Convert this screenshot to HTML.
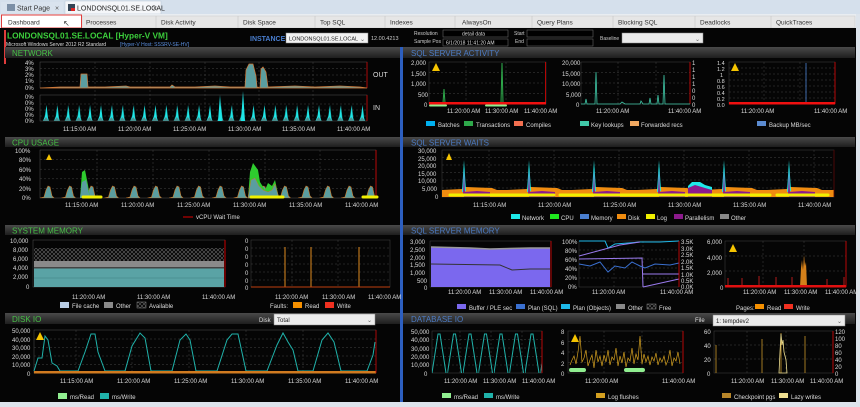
<!DOCTYPE html>
<html><head><meta charset="utf-8"><style>
html,body{margin:0;padding:0;width:860px;height:407px;overflow:hidden;background:#d5e0ec;font-family:"Liberation Sans",sans-serif}
svg{display:block}
text{font-family:"Liberation Sans",sans-serif}
</style></head><body>
<svg width="860" height="407" viewBox="0 0 860 407" xmlns="http://www.w3.org/2000/svg">
<defs>
<linearGradient id="hg" x1="0" y1="0" x2="0" y2="1"><stop offset="0" stop-color="#4a4a4a"/><stop offset="1" stop-color="#1e1e1e"/></linearGradient>
<pattern id="pin" patternUnits="userSpaceOnUse" x="43" y="96" width="10.9" height="25"><path d="M0,25 L2,20 L3.5,9 L5,22 L6,25 Z" fill="#1ee8e8"/><path d="M0,25 L3,21 L6,25Z" fill="#4a8f8f"/></pattern>
<pattern id="pcpu" patternUnits="userSpaceOnUse" x="40" y="150" width="21.5" height="48"><path d="M0,48 L4,47 L6,40 L8,36 L10,37 L12,46 L14,48 Z" fill="#5a9ea0" stroke="#c8782a" stroke-width="0.6"/></pattern>
<pattern id="pav" patternUnits="userSpaceOnUse" width="4" height="4"><path d="M0,0 L4,4 M4,0 L0,4" stroke="#666" stroke-width="0.6"/></pattern>
<pattern id="pwait" patternUnits="userSpaceOnUse" x="442" y="150" width="65" height="47"><path d="M0,47 L0,40 L20,39 L22,36 L24,37 L50,38 L55,40 L65,40 L65,47Z" fill="#f08c10"/><path d="M22,47 L22,42 L35,41 L48,42 L48,47Z" fill="#8c1a8c"/><path d="M20,42 L22,10 L24,41Z" fill="#1ee8e8"/><path d="M21,44 L22,20 L23,44Z" fill="#8c1a8c"/></pattern>
<pattern id="pdb" patternUnits="userSpaceOnUse" x="432" y="331" width="15.5" height="42"><path d="M0,42 L6,3 L8,3 L14,42" fill="none" stroke="#20b2aa" stroke-width="1"/></pattern>
</defs>

<rect x="0" y="0" width="860" height="14" fill="#d5e0ec"/>
<rect x="1" y="2" width="62" height="11" fill="#d9e3ee"/>
<rect x="7" y="4" width="8" height="7" fill="#7c8fa6"/>
<text x="17" y="10.5" font-size="7" fill="#333">Start Page</text>
<text x="55" y="10.5" font-size="7" fill="#555">×</text>
<rect x="65" y="1" width="96" height="13" fill="#f4f6f9" stroke="#b8c6d6" stroke-width="0.5"/>
<rect x="68" y="4" width="7" height="7" fill="#345"/><rect x="71" y="8" width="4" height="3" fill="#d22"/>
<text x="77" y="10.5" font-size="7" fill="#222">LONDONSQL01.SE.LOCAL</text>
<text x="153" y="10.5" font-size="7" fill="#333">×</text>
<rect x="0" y="14" width="856" height="14" fill="#e9edf1"/>
<g font-size="6.5" fill="#333" stroke="none">
<rect x="82" y="16" width="773" height="12" fill="#e6e6e6" stroke="#c9c9c9" stroke-width="0.5"/>
<path d="M156,16V28M238,16V28M315,16V28M385,16V28M455,16V28M532,16V28M613,16V28M695,16V28M771,16V28" stroke="#c4c4c4" stroke-width="0.6"/>
<rect x="1.5" y="15" width="80" height="13" fill="#fff" stroke="#e03c3c" stroke-width="1"/>
<text x="8" y="24.5">Dashboard</text>
<text x="63" y="26" font-size="8">↖</text>
<text x="86" y="24.5">Processes</text>
<text x="161" y="24.5">Disk Activity</text>
<text x="243" y="24.5">Disk Space</text>
<text x="320" y="24.5">Top SQL</text>
<text x="390" y="24.5">Indexes</text>
<text x="462" y="24.5">AlwaysOn</text>
<text x="537" y="24.5">Query Plans</text>
<text x="618" y="24.5">Blocking SQL</text>
<text x="700" y="24.5">Deadlocks</text>
<text x="776" y="24.5">QuickTraces</text>
</g>

<rect x="0" y="28" width="856" height="374" fill="#050505"/>
<rect x="856" y="14" width="4" height="393" fill="#dde4ec"/>
<rect x="0" y="402" width="860" height="5" fill="#dde4ec"/>
<rect x="4" y="30" width="2" height="34" fill="#e03c3c"/>
<text x="7" y="38.5" font-size="8.3" font-weight="bold" fill="#3ccf3c">LONDONSQL01.SE.LOCAL [Hyper-V VM]</text>
<text x="6" y="46" font-size="5" fill="#ddd">Microsoft Windows Server 2012 R2 Standard</text>
<text x="120" y="46" font-size="5" fill="#5c8fe0" text-decoration="underline">[Hyper-V Host: SSSRV-SE-HV]</text>
<text x="250" y="41" font-size="7" font-weight="bold" fill="#4a7fd0">INSTANCE</text>
<rect x="286" y="33" width="82" height="10" fill="#f2f2f2" stroke="#888" stroke-width="0.5"/>
<text x="289" y="40.5" font-size="5.5" fill="#222">LONDONSQL01.SE.LOCAL</text><text x="360" y="41" font-size="6" fill="#666">⌄</text>
<text x="371" y="40" font-size="5.5" fill="#ccc">12.00.4213</text>
<text x="414" y="35" font-size="5" fill="#ccc">Resolution</text>
<text x="414" y="43" font-size="5" fill="#ccc">Sample Pos</text>
<rect x="443" y="30" width="65" height="7" fill="#000" stroke="#777" stroke-width="0.5"/>
<text x="462" y="35.5" font-size="5" fill="#ddd">detail data</text>
<rect x="443" y="39" width="65" height="7" fill="#000" stroke="#777" stroke-width="0.5"/>
<text x="446" y="44.5" font-size="5" fill="#ddd">6/1/2018 11:41:20 AM</text>
<text x="514" y="35" font-size="5" fill="#ccc">Start</text><text x="515" y="43" font-size="5" fill="#ccc">End</text>
<rect x="527" y="30" width="66" height="7" fill="#000" stroke="#777" stroke-width="0.5"/>
<rect x="527" y="39" width="66" height="7" fill="#000" stroke="#777" stroke-width="0.5"/>
<text x="600" y="40" font-size="5" fill="#ccc">Baseline</text>
<rect x="622" y="33" width="81" height="10" fill="#eaeaea" stroke="#888" stroke-width="0.5"/><text x="695" y="41" font-size="6" fill="#666">⌄</text>

<rect x="400" y="47" width="3" height="355" fill="#2d5fc0"/>

<g font-size="8">
<rect x="5" y="47" width="395" height="11" fill="url(#hg)"/><text x="12" y="56" fill="#47c047">NETWORK</text>
<rect x="403" y="47" width="452" height="11" fill="url(#hg)"/><text x="411" y="56" fill="#4d7cc4">SQL SERVER ACTIVITY</text>
<rect x="5" y="137" width="395" height="10" fill="url(#hg)"/><text x="12" y="145.5" fill="#47c047">CPU USAGE</text>
<rect x="403" y="137" width="452" height="10" fill="url(#hg)"/><text x="411" y="145.5" fill="#4d7cc4">SQL SERVER WAITS</text>
<rect x="5" y="225" width="395" height="10" fill="url(#hg)"/><text x="12" y="233.5" fill="#47c047">SYSTEM MEMORY</text>
<rect x="403" y="225" width="452" height="10" fill="url(#hg)"/><text x="411" y="233.5" fill="#4d7cc4">SQL SERVER MEMORY</text>
<rect x="5" y="313" width="395" height="11" fill="url(#hg)"/><text x="12" y="322" fill="#47c047">DISK IO</text>
<rect x="403" y="313" width="452" height="11" fill="url(#hg)"/><text x="411" y="322" fill="#4d7cc4">DATABASE IO</text>
</g>

<g font-size="6" fill="#ddd">
<rect x="40" y="62" width="327" height="26" fill="none" stroke="#555" stroke-width="0.5"/>
<path d="M40,68.5H367M40,75H367M40,81.5H367M40,104H367M40,110H367M40,116H367" stroke="#444" stroke-dasharray="2,2" stroke-width="0.5"/>
<path d="M95,62V121M150,62V121M205,62V121M259,62V121M313,62V121" stroke="#444" stroke-dasharray="2,2" stroke-width="0.5"/>
<line x1="367" y1="62" x2="367" y2="88" stroke="#c00" stroke-width="0.8"/>
<path d="M40,88 L60,87 L80,87 L81,74 L87,74 L88,87 L105,87 L126,86 L130,87 L170,87 L172,85 L175,87 L195,87 L215,86 L230,87 L245,87 L246,70 L249,64 L253,64 L256,76 L257,87 L260,88 L261,69 L263,67 L266,72 L268,87 L295,86 L315,87 L340,86 L360,87 L367,88Z" fill="#5a9ea0" stroke="#d07a3a" stroke-width="0.7"/>
<text x="25" y="65">4%</text><text x="25" y="71">3%</text><text x="25" y="77">2%</text><text x="25" y="83">1%</text><text x="25" y="90">0%</text>
<rect x="40" y="95" width="327" height="26" fill="none" stroke="#555" stroke-width="0.5"/>
<line x1="367" y1="95" x2="367" y2="121" stroke="#c00" stroke-width="0.8"/>
<rect x="40" y="96" width="327" height="25" fill="url(#pin)"/>
<path d="M218,121 L220,95 L222,121Z M241,121 L243,91 L245,121Z" fill="#1ee8e8"/>
<text x="25" y="99">0%</text><text x="25" y="105">0%</text><text x="25" y="111">0%</text><text x="25" y="117">0%</text><text x="25" y="123">0%</text>
<text x="373" y="77" font-size="7">OUT</text><text x="373" y="110" font-size="7">IN</text>
<text x="63" y="131">11:15:00 AM</text><text x="118" y="131">11:20:00 AM</text><text x="173" y="131">11:25:00 AM</text><text x="228" y="131">11:30:00 AM</text><text x="282" y="131">11:35:00 AM</text><text x="337" y="131">11:40:00 AM</text>

<rect x="40" y="150" width="336" height="48" fill="none" stroke="#555" stroke-width="0.5"/>
<path d="M40,159.6H376M40,169.2H376M40,178.8H376M40,188.4H376M97,150V198M153,150V198M209,150V198M265,150V198M320,150V198" stroke="#444" stroke-dasharray="2,2" stroke-width="0.5"/>
<rect x="40" y="150" width="336" height="48" fill="url(#pcpu)"/>
<path d="M80,198 L82,172 L85,170 L88,185 L90,198Z" fill="#2ecc2e"/>
<path d="M80,198 L82,182 L86,180 L90,198Z" fill="#5a9ea0"/>
<path d="M248,198 L250,172 L253,163 L258,170 L260,182 L265,190 L268,183 L272,186 L275,180 L279,198Z" fill="#2ecc2e"/>
<path d="M248,198 L251,180 L255,178 L259,186 L263,190 L268,192 L272,190 L275,184 L279,198Z" fill="#5a9ea0" stroke="#c8782a" stroke-width="0.5"/>
<line x1="376" y1="150" x2="376" y2="198" stroke="#d00" stroke-width="0.8"/>
<path d="M83,197H101M251,197H283M363,197H377" stroke="#f0f000" stroke-width="3" stroke-linecap="round"/>
<path d="M46,160 L49,154 L52,160Z" fill="#f5c400"/>
<text x="15" y="153">100%</text><text x="19" y="162">80%</text><text x="19" y="172">60%</text><text x="19" y="181">40%</text><text x="19" y="191">20%</text><text x="22" y="200">0%</text>
<text x="65" y="207">11:15:00 AM</text><text x="121" y="207">11:20:00 AM</text><text x="177" y="207">11:25:00 AM</text><text x="233" y="207">11:30:00 AM</text><text x="289" y="207">11:35:00 AM</text><text x="345" y="207">11:40:00 AM</text>
<line x1="183" y1="217" x2="193" y2="217" stroke="#d00"/><text x="196" y="219">vCPU Wait Time</text>

<rect x="33" y="240" width="192" height="47" fill="none" stroke="#555" stroke-width="0.5"/>
<rect x="34" y="248" width="190" height="13" fill="url(#pav)"/>
<rect x="34" y="261" width="190" height="7" fill="#8a8a8a"/>
<rect x="34" y="267" width="190" height="1.5" fill="#444"/>
<rect x="34" y="268.5" width="190" height="18.5" fill="#5aa3a5"/>
<line x1="34" y1="278" x2="224" y2="278" stroke="#3f7f80" stroke-width="0.6"/>
<line x1="225" y1="240" x2="225" y2="287" stroke="#c00" stroke-width="1"/>
<text x="10" y="243">10,000</text><text x="13" y="252">8,000</text><text x="13" y="261">6,000</text><text x="13" y="270">4,000</text><text x="13" y="279">2,000</text><text x="26" y="289">0</text>
<text x="72" y="299">11:20:00 AM</text><text x="137" y="299">11:30:00 AM</text><text x="202" y="299">11:40:00 AM</text>
<rect x="251" y="240" width="139" height="47" fill="none" stroke="#444" stroke-width="0.5"/>
<path d="M251,248H390M251,256H390M251,264H390M251,272H390M251,280H390M292,240V287M338,240V287" stroke="#444" stroke-dasharray="2,2" stroke-width="0.5"/>
<path d="M285,287V247M311,287V247M359,287V247" stroke="#e08a20" stroke-width="1"/>
<path d="M251,287H390" stroke="#c04010" stroke-width="1"/>
<text x="245" y="243">0</text><text x="245" y="251">0</text><text x="245" y="259">0</text><text x="245" y="267">0</text><text x="245" y="275">0</text><text x="245" y="283">0</text><text x="245" y="290">0</text>
<text x="275" y="299">11:20:00 AM</text><text x="322" y="299">11:30:00 AM</text><text x="368" y="299">11:40:00 AM</text>
<rect x="60" y="302" width="9" height="6" fill="#b8cce4"/><text x="72" y="308">File cache</text>
<rect x="104" y="302" width="9" height="6" fill="#8a8a8a"/><text x="116" y="308">Other</text>
<rect x="137" y="302" width="9" height="6" fill="url(#pav)" stroke="#888" stroke-width="0.5"/><text x="149" y="308">Available</text>
<text x="270" y="308">Faults:</text>
<rect x="293" y="302" width="9" height="6" fill="#f59000"/><text x="305" y="308">Read</text>
<rect x="325" y="302" width="9" height="6" fill="#f03020"/><text x="337" y="308">Write</text>

<text x="259" y="322">Disk</text>
<rect x="274" y="314" width="101" height="11" fill="#ececec" stroke="#888" stroke-width="0.5"/>
<text x="277" y="322" fill="#222">Total</text><text x="367" y="322" fill="#666">⌄</text>
<rect x="34" y="330" width="342" height="43" fill="none" stroke="#555" stroke-width="0.5"/>
<path d="M34,339H376M34,347.5H376M34,356H376M34,364.5H376M76,330V373M132,330V373M189,330V373M246,330V373M303,330V373" stroke="#444" stroke-dasharray="2,2" stroke-width="0.5"/>
<path d="M34,371 L38,358 L42,358 L45,336 L48,340 L52,363 L57,366 L60,371 L78,371 L85,352 L91,334 L95,334 L98,352 L105,371 L125,371 L132,346 L140,333 L145,338 L151,371 L172,371 L180,340 L186,334 L190,340 L196,371 L217,371 L227,340 L232,334 L238,334 L246,371 L267,371 L277,345 L283,333 L288,342 L293,350 L298,371 L313,371 L322,340 L328,333 L334,342 L341,371 L367,371 L373,355 L375,342" fill="none" stroke="#20b2aa" stroke-width="1"/>
<rect x="34" y="371" width="342" height="2.5" fill="#d07a20"/>
<line x1="376" y1="330" x2="376" y2="373" stroke="#c00" stroke-width="0.8"/>
<path d="M36,340 L40,332 L44,340Z" fill="#f5c400"/>
<text x="12" y="333">50,000</text><text x="12" y="342">40,000</text><text x="12" y="350">30,000</text><text x="12" y="359">20,000</text><text x="12" y="367">10,000</text><text x="27" y="376">0</text>
<text x="60" y="383">11:15:00 AM</text><text x="117" y="383">11:20:00 AM</text><text x="174" y="383">11:25:00 AM</text><text x="231" y="383">11:30:00 AM</text><text x="288" y="383">11:35:00 AM</text><text x="345" y="383">11:40:00 AM</text>
<rect x="58" y="393" width="9" height="6" fill="#90ee90"/><text x="70" y="399">ms/Read</text>
<rect x="100" y="393" width="9" height="6" fill="#20b2aa"/><text x="112" y="399">ms/Write</text>

<rect x="429" y="62" width="117" height="42" fill="none" stroke="#444" stroke-width="0.5"/>
<path d="M429,72.5H546M429,83H546M429,93.5H546M466,62V104M506,62V104" stroke="#444" stroke-dasharray="2,2" stroke-width="0.5"/>
<line x1="545.5" y1="62" x2="545.5" y2="104" stroke="#d00" stroke-width="0.8"/>
<path d="M443,103 L444,89 L445,103 M501,103 L502,63 L503,103" fill="none" stroke="#2ea84a" stroke-width="1"/>
<rect x="429" y="102" width="117" height="2.5" fill="#f01010"/>
<path d="M430,105.5H446M486,105.5H506" stroke="#90ee90" stroke-width="2" stroke-linecap="round"/>
<path d="M432,71 L436,63 L440,71Z" fill="#f5c400"/>
<text x="411" y="65">2,000</text><text x="411" y="76">1,500</text><text x="411" y="86">1,000</text><text x="418" y="97">500</text><text x="424" y="107">0</text>
<text x="447" y="113">11:20:00 AM</text><text x="485" y="113">11:30:00 AM</text><text x="524" y="113">11:40:00 AM</text>
<rect x="426" y="121" width="9" height="5" fill="#00b0f0"/><text x="438" y="127">Batches</text>
<rect x="464" y="121" width="9" height="5" fill="#2ea84a"/><text x="476" y="127">Transactions</text>
<rect x="514" y="121" width="9" height="5" fill="#f47050"/><text x="526" y="127">Compiles</text>

<rect x="581" y="62" width="109" height="42" fill="none" stroke="#444" stroke-width="0.5"/>
<path d="M581,72.5H690M581,83H690M581,93.5H690M618,62V104M656,62V104" stroke="#444" stroke-dasharray="2,2" stroke-width="0.5"/>
<line x1="690" y1="62" x2="690" y2="104" stroke="#d00" stroke-width="0.8"/>
<path d="M581,104 L585,104 L586,99 L587,104 L595,104 L596,72 L597,104 L620,104 L622,102 L625,104 L640,104 L641,101 L643,104 L649,104 L650,98 L651,104 L657,104 L658,95 L659,104 L663,104 L664,75 L665,104 L690,104" fill="none" stroke="#40c8a8" stroke-width="0.8"/>
<text x="562" y="65">20,000</text><text x="562" y="76">15,000</text><text x="562" y="86">10,000</text><text x="566" y="97">5,000</text><text x="576" y="107">0</text>
<text x="692" y="65">1</text><text x="692" y="72">1</text><text x="692" y="79">1</text><text x="692" y="86">1</text><text x="692" y="93">0</text><text x="692" y="100">0</text><text x="692" y="107">0</text>
<text x="596" y="113">11:20:00 AM</text><text x="668" y="113">11:40:00 AM</text>
<rect x="580" y="121" width="9" height="5" fill="#40c8a8"/><text x="591" y="127">Key lookups</text>
<rect x="630" y="121" width="9" height="5" fill="#f0a860"/><text x="641" y="127">Forwarded recs</text>

<rect x="729" y="62" width="106" height="42" fill="none" stroke="#444" stroke-width="0.5"/>
<path d="M729,68H835M729,74H835M729,80H835M729,86H835M729,92H835M729,98H835M764,62V104M800,62V104" stroke="#444" stroke-dasharray="2,2" stroke-width="0.5"/>
<line x1="835" y1="62" x2="835" y2="104" stroke="#d00" stroke-width="0.8"/>
<line x1="806" y1="63" x2="806" y2="104" stroke="#4a7fd0" stroke-width="0.8"/>
<rect x="729" y="102" width="106" height="2.5" fill="#f01010"/>
<path d="M731,71 L735,63 L739,71Z" fill="#f5c400"/>
<text x="717" y="65" font-size="5.5">1.4</text><text x="717" y="71" font-size="5.5">1.2</text><text x="720" y="77" font-size="5.5">1</text><text x="717" y="83" font-size="5.5">0.8</text><text x="717" y="89" font-size="5.5">0.6</text><text x="717" y="95" font-size="5.5">0.4</text><text x="717" y="101" font-size="5.5">0.2</text><text x="717" y="107" font-size="5.5">0.0</text>
<text x="741" y="113">11:20:00 AM</text><text x="814" y="113">11:40:00 AM</text>
<rect x="757" y="121" width="9" height="5" fill="#5b8bd0"/><text x="769" y="127">Backup MB/sec</text>

<rect x="442" y="150" width="392" height="47" fill="none" stroke="#444" stroke-width="0.5"/>
<path d="M442,157.5H834M442,165H834M442,172.5H834M442,180H834M442,188H834M489,150V197M554,150V197M619,150V197M684,150V197M749,150V197M814,150V197" stroke="#444" stroke-dasharray="2,2" stroke-width="0.5"/>
<rect x="442" y="150" width="392" height="47" fill="url(#pwait)"/>
<path d="M688,197 L688,186 L692,182 L700,182 L705,185 L712,187 L712,197Z" fill="#1ee8e8"/>
<path d="M688,197 L688,188 L695,185 L705,188 L712,190 L712,197Z" fill="#8c1a8c"/>
<line x1="834" y1="150" x2="834" y2="197" stroke="#500" stroke-width="0.8"/>
<path d="M450,195H554M560,195H770M777,195H828" stroke="#f0f000" stroke-width="3" stroke-linecap="round"/>
<path d="M446,160 L449,153 L452,160Z" fill="#f5c400"/>
<text x="418" y="153">30,000</text><text x="418" y="161">25,000</text><text x="418" y="168">20,000</text><text x="418" y="176">15,000</text><text x="418" y="183">10,000</text><text x="422" y="191">5,000</text><text x="435" y="199">0</text>
<text x="473" y="207">11:15:00 AM</text><text x="538" y="207">11:20:00 AM</text><text x="603" y="207">11:25:00 AM</text><text x="668" y="207">11:30:00 AM</text><text x="733" y="207">11:35:00 AM</text><text x="798" y="207">11:40:00 AM</text>
<rect x="511" y="214" width="9" height="5" fill="#1ee8e8"/><text x="522" y="220">Network</text>
<rect x="550" y="214" width="9" height="5" fill="#1ee81e"/><text x="561" y="220">CPU</text>
<rect x="580" y="214" width="9" height="5" fill="#4a7fd0"/><text x="591" y="220">Memory</text>
<rect x="617" y="214" width="9" height="5" fill="#f08c10"/><text x="628" y="220">Disk</text>
<rect x="646" y="214" width="9" height="5" fill="#f0f000"/><text x="657" y="220">Log</text>
<rect x="674" y="214" width="9" height="5" fill="#8c1a8c"/><text x="685" y="220">Parallelism</text>
<rect x="720" y="214" width="9" height="5" fill="#888"/><text x="731" y="220">Other</text>

<rect x="430" y="241" width="121" height="46" fill="none" stroke="#444" stroke-width="0.5"/>
<path d="M431,287 L431,247 L470,248 L490,249 L530,248 L550,248 L550,287Z" fill="#7b68ee"/>
<path d="M431,247 L470,248 L490,249 L530,248 L550,248" fill="none" stroke="#999" stroke-width="1.5"/>
<path d="M431,264 L500,265 L512,270 L530,269 L550,269" fill="none" stroke="#333" stroke-width="1"/>
<line x1="551" y1="241" x2="551" y2="287" stroke="#d00" stroke-width="0.8"/>
<text x="410" y="244">3,000</text><text x="410" y="252">2,500</text><text x="410" y="260">2,000</text><text x="410" y="267">1,500</text><text x="410" y="275">1,000</text><text x="417" y="283">500</text><text x="424" y="290">0</text>
<text x="448" y="294">11:20:00 AM</text><text x="489" y="294">11:30:00 AM</text><text x="530" y="294">11:40:00 AM</text>

<rect x="579" y="241" width="100" height="46" fill="none" stroke="#444" stroke-width="0.5"/>
<path d="M579,250H679M579,259H679M579,268H679M579,278H679M614,241V287M643,241V287" stroke="#444" stroke-dasharray="2,2" stroke-width="0.5"/>
<path d="M579,241 L605,241 L608,248 L615,244 L640,242 L660,242 L679,241" fill="none" stroke="#1eb8e8" stroke-width="1"/>
<path d="M579,256 L620,245 L640,242 M579,259 L642,258 L643,287 M643,274 L679,274 M643,287 L679,279" fill="none" stroke="#9a7aee" stroke-width="1"/>
<path d="M579,264 L590,266 L600,262 L608,272 L615,266 L625,268 L632,262 L640,266 L645,268 L655,264 L670,265 L679,263" fill="none" stroke="#3a70d0" stroke-width="1"/>
<line x1="679" y1="241" x2="679" y2="287" stroke="#d00" stroke-width="0.8"/>
<text x="562" y="244">100%</text><text x="565" y="253">80%</text><text x="565" y="262">60%</text><text x="565" y="271">40%</text><text x="565" y="280">20%</text><text x="568" y="289">0%</text>
<text x="681" y="244">3.5K</text><text x="681" y="251">3.0K</text><text x="681" y="257">2.5K</text><text x="681" y="264">2.0K</text><text x="681" y="270">1.5K</text><text x="681" y="277">1.0K</text><text x="681" y="283">0.5K</text><text x="681" y="289">0.0K</text>
<text x="592" y="294">11:20:00 AM</text><text x="660" y="294">11:40:00 AM</text>

<rect x="725" y="241" width="121" height="46" fill="none" stroke="#444" stroke-width="0.5"/>
<path d="M725,256H846M725,271H846M763,241V287M804,241V287" stroke="#444" stroke-dasharray="2,2" stroke-width="0.5"/>
<path d="M728,287V278M742,287V278M759,287V276M776,287V277M792,287V277M827,287V279M844,287V277" stroke="#e02020" stroke-width="0.8"/>
<path d="M800,287 L801,268 L802,260 L803,270 L804,255 L805,266 L806,262 L807,287Z" fill="#d4801a"/>
<rect x="725" y="285" width="121" height="2.5" fill="#e01010"/>
<line x1="846" y1="241" x2="846" y2="287" stroke="#d00" stroke-width="0.8"/>
<path d="M729,252 L733,244 L737,252Z" fill="#f5c400"/>
<text x="707" y="244">6,000</text><text x="707" y="260">4,000</text><text x="707" y="275">2,000</text><text x="720" y="290">0</text>
<text x="743" y="294">11:20:00 AM</text><text x="784" y="294">11:30:00 AM</text><text x="825" y="294">11:40:00 AM</text>

<rect x="457" y="304" width="9" height="5" fill="#7b68ee"/><text x="469" y="310">Buffer / PLE sec</text>
<rect x="516" y="304" width="9" height="5" fill="#3a70d0"/><text x="528" y="310">Plan (SQL)</text>
<rect x="561" y="304" width="9" height="5" fill="#1eb8e8"/><text x="573" y="310">Plan (Objects)</text>
<rect x="616" y="304" width="9" height="5" fill="#888"/><text x="628" y="310">Other</text>
<rect x="647" y="304" width="9" height="5" fill="url(#pav)" stroke="#888" stroke-width="0.5"/><text x="659" y="310">Free</text>
<text x="736" y="310">Pages:</text>
<rect x="755" y="304" width="9" height="5" fill="#f59000"/><text x="767" y="310">Read</text>
<rect x="784" y="304" width="9" height="5" fill="#f03020"/><text x="796" y="310">Write</text>

<text x="695" y="322">File</text>
<rect x="713" y="315" width="132" height="11" fill="#ececec" stroke="#888" stroke-width="0.5"/>
<text x="716" y="323" fill="#222">1: tempdev2</text><text x="837" y="323" fill="#666">⌄</text>

<rect x="432" y="331" width="110" height="42" fill="none" stroke="#444" stroke-width="0.5"/>
<path d="M432,339.5H542M432,348H542M432,356.5H542M432,365H542M460,331V373M491,331V373M522,331V373" stroke="#444" stroke-dasharray="2,2" stroke-width="0.5"/>
<rect x="432" y="331" width="110" height="42" fill="url(#pdb)"/>
<line x1="542" y1="331" x2="542" y2="373" stroke="#d00" stroke-width="0.8"/>
<text x="411" y="334">50,000</text><text x="411" y="342">40,000</text><text x="411" y="351">30,000</text><text x="411" y="359">20,000</text><text x="411" y="367">10,000</text><text x="424" y="376">0</text>
<text x="444" y="383">11:20:00 AM</text><text x="483" y="383">11:30:00 AM</text><text x="522" y="383">11:40:00 AM</text>

<rect x="568" y="331" width="115" height="42" fill="none" stroke="#444" stroke-width="0.5"/>
<path d="M568,341.5H683M568,352H683M568,362.5H683M604,331V373M642,331V373" stroke="#444" stroke-dasharray="2,2" stroke-width="0.5"/>
<path d="M570,365 L572,360 L574,356 L576,364 L578,352 L580,336 L582,362 L584,358 L586,350 L588,366 L590,360 L592,355 L594,368 L596,350 L598,362 L600,356 L602,366 L604,355 L606,362 L608,350 L610,365 L612,357 L614,360 L616,348 L618,366 L620,356 L622,363 L624,352 L626,367 L628,358 L630,361 L632,348 L634,364 L636,354 L638,360 L640,336 L642,364 L644,354 L646,362 L648,356 L650,365 L652,357 L654,361 L656,353 L658,365 L660,358 L662,362 L664,356 L666,365 L668,360 L670,350 L672,366 L674,358 L676,361 L678,352 L680,364" fill="none" stroke="#d4a020" stroke-width="0.7"/>
<line x1="683" y1="331" x2="683" y2="373" stroke="#d00" stroke-width="0.8"/>
<path d="M571,370H584M626,370H643" stroke="#90ee90" stroke-width="4" stroke-linecap="round"/>
<path d="M571,342 L575,334 L579,342Z" fill="#f5c400"/>
<text x="561" y="334">8</text><text x="561" y="345">6</text><text x="561" y="355">4</text><text x="561" y="366">2</text><text x="561" y="376">0</text>
<text x="585" y="383">11:20:00 AM</text><text x="662" y="383">11:40:00 AM</text>

<rect x="714" y="331" width="119" height="42" fill="none" stroke="#444" stroke-width="0.5"/>
<path d="M714,345H833M714,359H833M747,331V373M786,331V373" stroke="#444" stroke-dasharray="2,2" stroke-width="0.5"/>
<path d="M716,373V345M762,373V339M805,373V336M781,373V333" stroke="#c8962a" stroke-width="0.8"/>
<path d="M779,373 L780,352 L781,334 L782,345 L783,340 L784,352 L786,360 L787,373Z" fill="none" stroke="#eede90" stroke-width="0.8"/>
<line x1="833" y1="331" x2="833" y2="373" stroke="#d00" stroke-width="0.8"/>
<text x="704" y="334">60</text><text x="704" y="348">40</text><text x="704" y="362">20</text><text x="707" y="376">0</text>
<text x="835" y="334">120</text><text x="835" y="341">100</text><text x="835" y="348">80</text><text x="835" y="355">60</text><text x="835" y="362">40</text><text x="835" y="369">20</text><text x="835" y="376">0</text>
<text x="731" y="383">11:20:00 AM</text><text x="771" y="383">11:30:00 AM</text><text x="810" y="383">11:40:00 AM</text>

<rect x="442" y="393" width="9" height="5" fill="#90ee90"/><text x="454" y="399">ms/Read</text>
<rect x="484" y="393" width="9" height="5" fill="#20b2aa"/><text x="496" y="399">ms/Write</text>
<rect x="596" y="393" width="9" height="5" fill="#d4a020"/><text x="608" y="399">Log flushes</text>
<rect x="722" y="393" width="9" height="5" fill="#b8862a"/><text x="734" y="399">Checkpoint pgs</text>
<rect x="779" y="393" width="9" height="5" fill="#eede90"/><text x="791" y="399">Lazy writes</text>
</g>
</svg>
</body></html>
